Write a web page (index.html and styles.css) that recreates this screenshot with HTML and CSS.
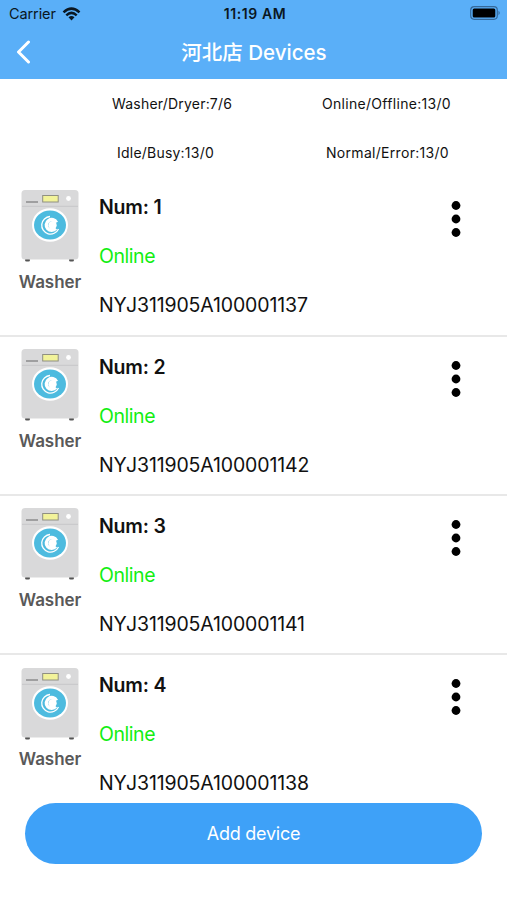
FILE: index.html
```html
<!DOCTYPE html>
<html lang="en">
<head>
<meta charset="utf-8">
<title>Devices</title>
<link rel="stylesheet" href="styles.css">
</head>
<body>
<svg width="0" height="0" class="defs" aria-hidden="true">
  <symbol id="washer" viewBox="0 0 60 74">
    <rect x="5" y="69.500" width="5" height="3" rx="1.500" fill="#555"/>
    <rect x="49" y="69.500" width="5" height="3" rx="1.500" fill="#555"/>
    <rect x="1.500" y="1" width="57" height="69.500" rx="3.500" fill="#d9d9da"/>
    <path d="M2 17.300h56" stroke="#c6c6c8" stroke-width="1"/>
    <path d="M6 13h12" stroke="#8b8b8d" stroke-width="1.500"/>
    <rect x="22.700" y="6.500" width="15.500" height="6.500" fill="#f2f39a" stroke="#909082" stroke-width="1"/>
    <circle cx="48.500" cy="9.500" r="2.400" fill="#fff"/>
    <ellipse cx="30" cy="36" rx="18" ry="16.800" fill="#fff"/>
    <ellipse cx="30" cy="36" rx="16" ry="14.600" fill="#4dbbdf"/>
    <path d="M30 27.500A8.800 8.800 0 1 0 38.500 40" fill="none" stroke="#fff" stroke-width="1.300"/>
    <path d="M36.500 33.500A5.400 5.400 0 1 0 35.800 39.500" fill="none" stroke="#fff" stroke-width="3.400"/>
    <circle cx="32.500" cy="36.300" r="4.200" fill="#fff"/>
  </symbol>
  <symbol id="dots" viewBox="0 0 12 38">
    <circle cx="6" cy="5.500" r="4.400"/><circle cx="6" cy="19" r="4.400"/><circle cx="6" cy="32.500" r="4.400"/>
  </symbol>
</svg>
<header class="header">
  <div class="status">
    <div class="carrier"><span class="carrier-name">Carrier</span>
      <svg class="wifi" viewBox="0 0 18 14"><g fill="none" stroke="#0a1722" stroke-width="2.500"><path d="M1 5.300Q9-2.100 17 5.300"/><path d="M3.800 8.300Q9 3.500 14.200 8.300"/></g><path d="M6 10.300Q9 7.700 12 10.300L9 13.500z" fill="#0a1722"/></svg>
    </div>
    <div class="time">11:19 AM</div>
    <svg class="battery" viewBox="0 0 31 15"><rect x=".7" y=".7" width="26.600" height="12.600" rx="3.500" fill="none" stroke="#35699a" stroke-width="1.200"/><rect x="2.700" y="2.500" width="22.600" height="9" rx="1.500"/><path d="M28.500 4.800q2.500 2.200 0 4.400z" fill="#35699a"/></svg>
  </div>
  <div class="nav">
    <svg class="back" viewBox="0 0 16 24"><path d="M12.500 2L2.500 12 12.500 22" fill="none" stroke="#fff" stroke-width="3" stroke-linecap="round" stroke-linejoin="round"/></svg>
    <h1 class="title">河北店 Devices</h1>
  </div>
</header>
<section class="stats">
  <div class="stat-row"><span class="stat washers">Washer/Dryer:7/6</span><span class="stat online-count">Online/Offline:13/0</span></div>
  <div class="stat-row"><span class="stat idle">Idle/Busy:13/0</span><span class="stat normal">Normal/Error:13/0</span></div>
</section>
<main class="list">
  <article class="device">
    <div class="kind"><svg class="washer"><use href="#washer"/></svg><span class="kind-name">Washer</span></div>
    <div class="info"><div class="num">Num: 1</div><div class="state">Online</div><div class="serial">NYJ311905A100001137</div></div>
    <svg class="more"><use href="#dots"/></svg>
  </article>
  <article class="device">
    <div class="kind"><svg class="washer"><use href="#washer"/></svg><span class="kind-name">Washer</span></div>
    <div class="info"><div class="num">Num: 2</div><div class="state">Online</div><div class="serial">NYJ311905A100001142</div></div>
    <svg class="more"><use href="#dots"/></svg>
  </article>
  <article class="device">
    <div class="kind"><svg class="washer"><use href="#washer"/></svg><span class="kind-name">Washer</span></div>
    <div class="info"><div class="num">Num: 3</div><div class="state">Online</div><div class="serial">NYJ311905A100001141</div></div>
    <svg class="more"><use href="#dots"/></svg>
  </article>
  <article class="device">
    <div class="kind"><svg class="washer"><use href="#washer"/></svg><span class="kind-name">Washer</span></div>
    <div class="info"><div class="num">Num: 4</div><div class="state">Online</div><div class="serial">NYJ311905A100001138</div></div>
    <svg class="more"><use href="#dots"/></svg>
  </article>
</main>
<footer class="footer"><button class="add">Add device</button></footer>
</body>
</html>
```
FILE: styles.css
```css
* { box-sizing: border-box; }
body {
  margin: 0;
  height: 900px;
  overflow: hidden;
  display: flex;
  flex-direction: column;
  background: #fff;
  color: #111;
  font-family: Inter, "Noto Sans CJK SC", sans-serif;
}
.defs { display: none; }
.header { flex: none; height: 79px; background: #5aaff8; }
.status {
  display: grid;
  grid-template-columns: 1fr auto 1fr;
  align-items: center;
  height: 27px;
  padding: 0 6px 0 9px;
  color: #0a1722;
}
.carrier { display: flex; align-items: center; gap: 6px; }
.carrier-name { font-size: 14.5px; letter-spacing: -0.1px; }
.wifi { width: 19px; height: 14px; }
.time { font-size: 14px; font-weight: 600; letter-spacing: 0.6px; }
.battery { width: 31px; height: 15px; justify-self: end; }
.nav {
  display: grid;
  grid-template-columns: 40px 1fr 40px;
  align-items: center;
  height: 50px;
}
.back { width: 16px; height: 24px; margin-left: 16px; }
.title { margin: 0; padding: 1px 0 0 1px; text-align: center; color: #fff; font-size: 20.5px; font-weight: 500; line-height: 28px; }
.stats { flex: none; }
.stat-row { display: grid; grid-template-columns: 210px 1fr; height: 49px; line-height: 49px; margin-left: 112px; font-size: 14px; letter-spacing: 0.22px; }
.washers { letter-spacing: 0.2px; }
.online-count, .normal { letter-spacing: 0.3px; }
.idle { padding-left: 5px; }
.normal { padding-left: 4px; }
.list { flex: none; height: 625.5px; padding-top: 0.4px; overflow: hidden; }
.device {
  display: flex;
  align-items: flex-start;
  height: 159.2px;
  padding-top: 5px;
  border-bottom: 2px solid #e8e8e8;
}
.kind { display: flex; flex-direction: column; align-items: center; width: 99px; padding-top: 6.6px; }
.washer { width: 60px; height: 74px; }
.kind-name { margin-top: 7.6px; padding-left: 1px; color: #595959; font-size: 17px; font-weight: 600; line-height: 22px; letter-spacing: -0.05px; }
.info { flex: 1; padding-top: 1.1px; line-height: 49px; font-size: 19.5px; }
.num { font-weight: 600; letter-spacing: -0.2px; }
.state { color: #12ee12; letter-spacing: -0.45px; }
.serial { letter-spacing: -0.14px; }
.more { width: 12px; height: 38px; margin: 18px 45px 0 0; }
.footer { display: flex; padding: 0 25px; }
.add { flex: 1; height: 61px; border: 0; border-radius: 31px; background: #3ea1f8; color: #fff; font: 400 18px Inter, sans-serif; letter-spacing: -0.25px; }
```
